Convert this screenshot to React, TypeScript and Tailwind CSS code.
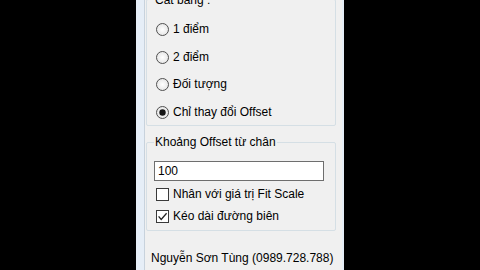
import React from "react";

const font = { fontFamily: '"Liberation Sans", Arial, sans-serif' };

function Radio({ checked }: { checked?: boolean }) {
  return (
    <svg width="13" height="13" viewBox="0 0 13 13" className="shrink-0">
      <defs>
        <radialGradient id="rg" cx="50%" cy="50%" r="50%">
          <stop offset="0%" stopColor="#ffffff" />
          <stop offset="100%" stopColor="#e6e6e6" />
        </radialGradient>
      </defs>
      <circle cx="6.5" cy="6.5" r="6" fill="url(#rg)" stroke="#505050" strokeWidth="1" />
      {checked && <circle cx="6.5" cy="6.5" r="3.2" fill="#151515" />}
    </svg>
  );
}

function Check({ checked }: { checked?: boolean }) {
  return (
    <svg width="13" height="13" viewBox="0 0 13 13" className="shrink-0">
      <rect x="0.5" y="0.5" width="12" height="12" fill="#ffffff" stroke="#3a3a3a" />
      {checked && (
        <path d="M2.6 6.4 L5.2 9.4 L10.6 3.2" fill="none" stroke="#222" strokeWidth="1.3" />
      )}
    </svg>
  );
}

export default function App() {
  return (
    <div className="w-[480px] h-[270px] bg-black overflow-hidden flex text-[12px] leading-[14px] text-black" style={font}>
      <div className="ml-[136px] w-[208px] h-full bg-[#e6eef7] pl-[8px] pr-[2px] flex">
        <div className="flex-1 bg-[#f0f0f0] flex flex-col border-l border-[#c8d2dc]">
          <div className="relative mt-[-1px] ml-[1px] w-[190px] h-[127px] shrink-0 border border-[#d5dfe5] rounded-[2px]">
            <div className="absolute top-[-7px] left-[7px] px-[1px] bg-[#f0f0f0]">Cắt bằng :</div>
            <div className="flex flex-col pt-[22px] pl-[9px]">
              <div className="h-[14px] flex items-center gap-[4px]"><Radio /><span>1 điểm</span></div>
              <div className="h-[14px] mt-[14px] flex items-center gap-[4px]"><Radio /><span>2 điểm</span></div>
              <div className="h-[14px] mt-[13px] flex items-center gap-[4px]"><Radio /><span>Đối tượng</span></div>
              <div className="h-[14px] mt-[14px] flex items-center gap-[4px]"><Radio checked /><span>Chỉ thay đổi Offset</span></div>
            </div>
          </div>
          <div className="relative mt-[16px] ml-[1px] w-[190px] h-[89px] shrink-0 border border-[#d5dfe5] rounded-[2px]">
            <div className="absolute top-[-8px] left-[7px] px-[1px] bg-[#f0f0f0]">Khoảng Offset từ chân</div>
            <div className="flex flex-col pt-[18px] pl-[7px]">
              <div className="w-[170px] h-[20px] bg-white border border-[#6e6e6e] flex items-center pl-[3px]">100</div>
              <div className="h-[14px] mt-[6px] ml-[2px] flex items-center gap-[4px]"><Check /><span>Nhân với giá trị Fit Scale</span></div>
              <div className="h-[14px] mt-[8px] ml-[2px] flex items-center gap-[4px]"><Check checked /><span>Kéo dài đường biên</span></div>
            </div>
          </div>
          <div className="mt-[20px] ml-[6px] h-[14px] whitespace-nowrap">Nguyễn Sơn Tùng (0989.728.788)</div>
        </div>
      </div>
    </div>
  );
}
